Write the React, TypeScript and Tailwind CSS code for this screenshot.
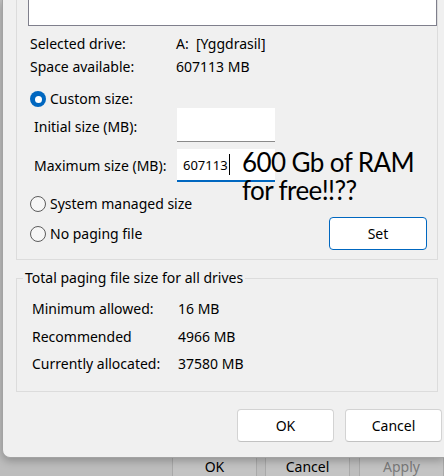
import React from "react";

const font = { fontFamily: '"Noto Sans", "Open Sans", sans-serif' };
const captionFont = { fontFamily: 'Lato, "Noto Sans", sans-serif' };

function Radio({ checked, label }: { checked?: boolean; label: string }) {
  return (
    <div className="flex items-center gap-[4px]">
      {checked ? (
        <span className="w-[16px] h-[16px] rounded-full bg-[#0067c0] flex items-center justify-center">
          <span className="w-[7px] h-[7px] rounded-full bg-white" />
        </span>
      ) : (
        <span className="w-[16px] h-[16px] rounded-full border border-[#5c5c5c] bg-[#f6f6f6]" />
      )}
      <span>{label}</span>
    </div>
  );
}

function InfoRow({ label, value, labelW }: { label: string; value: string; labelW: string }) {
  return (
    <div className="flex items-center h-[20px] whitespace-pre">
      <span className={labelW}>{label}</span>
      <span>{value}</span>
    </div>
  );
}

export default function App() {
  return (
    <div
      className="w-[444px] h-[476px] overflow-hidden bg-[#bdbdbd] text-[14px] text-black leading-[20px]"
      style={font}
    >
      <div className="relative ml-[2px] w-[442px] h-[458px] bg-[#f0f0f0] border-l border-b border-[#a3a3a3] rounded-bl-[8px] shadow-[0_3px_8px_rgba(0,0,0,0.25)]">
        {/* drive panel, top cut off */}
        <div className="ml-[13px] w-[422px] h-[260px] border-x border-b border-[#dcdcdc] flex flex-col">
          <div className="ml-[11px] w-[409px] h-[26px] bg-white border-x border-b border-[#7f7f8c]" />

          <div className="pl-[13px] mt-[8px]">
            <InfoRow label="Selected drive:" value="A:  [Yggdrasil]" labelW="w-[146px]" />
          </div>
          <div className="pl-[13px] mt-[3px]">
            <InfoRow label="Space available:" value="607113 MB" labelW="w-[146px]" />
          </div>

          <div className="pl-[13px] mt-[12px] h-[20px] flex items-center">
            <Radio checked label="Custom size:" />
          </div>

          <div className="pl-[17px] -mt-[1px] h-[34px] flex items-center">
            <span className="w-[143px] pt-[4px]">Initial size (MB):</span>
            <div className="w-[98px] h-[34px] bg-white border-b border-[#8a8a8a]" />
          </div>

          <div className="pl-[17px] mt-[7px] h-[33px] flex items-center">
            <span className="w-[143px]">Maximum size (MB):</span>
            <div className="w-[98px] h-[33px] bg-white border-b-2 border-[#0067c0] flex items-center pl-[6px] text-[13px]">
              <span>607113</span>
              <span className="ml-px w-px h-[21px] bg-black" />
            </div>
          </div>

          <div className="pl-[13px] mt-[12px] h-[20px] flex items-center">
            <Radio label="System managed size" />
          </div>

          <div className="pl-[13px] pr-[10px] mt-[3px] h-[33px] flex items-center justify-between">
            <Radio label="No paging file" />
            <button className="w-[98px] h-[33px] bg-white border border-[#0067c0] rounded-[4px]">Set</button>
          </div>
        </div>

        {/* totals */}
        <div className="relative ml-[13px] mt-[18px] w-[422px] h-[114px] border border-[#dcdcdc] pt-[20px] pl-[15px]">
          <span className="absolute left-[6px] -top-[11px] px-[2px] bg-[#f0f0f0]">
            Total paging file size for all drives
          </span>
          <InfoRow label="Minimum allowed:" value="16 MB" labelW="w-[146px]" />
          <div className="mt-[8px]">
            <InfoRow label="Recommended" value="4966 MB" labelW="w-[146px]" />
          </div>
          <div className="mt-[7px]">
            <InfoRow label="Currently allocated:" value="37580 MB" labelW="w-[146px]" />
          </div>
        </div>

        <div className="mt-[17px] pr-[2px] flex justify-end gap-[11px]">
          <button className="w-[97px] h-[33px] bg-white border border-[#d3d3d3] border-b-[#c2c2c2] rounded-[4px]">OK</button>
          <button className="w-[97px] h-[33px] bg-white border border-[#d3d3d3] border-b-[#c2c2c2] rounded-[4px]">Cancel</button>
        </div>

        {/* meme caption over the dialog */}
        <div
          className="absolute left-[239px] top-[148px] text-[26px] leading-[28px] tracking-[-0.6px] text-black whitespace-nowrap"
          style={captionFont}
        >
          <div>600 Gb of RAM</div>
          <div>for free!!??</div>
        </div>
      </div>

      {/* parent window buttons behind the dialog */}
      <div className="flex h-[18px] ml-[172px] gap-[8px] text-[14px] leading-[18px]">
        <div className="w-[86px] bg-[#c3c3c3] border-x border-[#a9a9a9] text-center">OK</div>
        <div className="w-[86px] bg-[#c3c3c3] border-x border-[#a9a9a9] text-center">Cancel</div>
        <div className="ml-px w-[86px] bg-[#c3c3c3] border-x border-[#a9a9a9] text-center text-[#7a7a7a]">Apply</div>
      </div>
    </div>
  );
}
